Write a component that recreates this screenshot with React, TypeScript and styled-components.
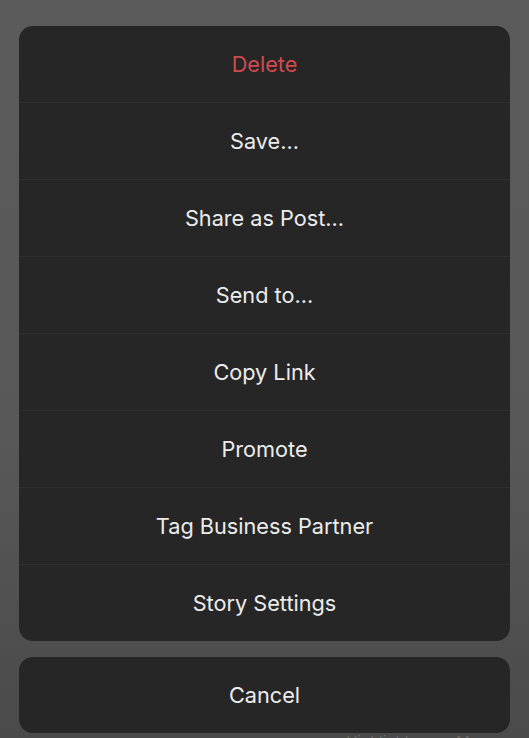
import React from "react";
import styled, { createGlobalStyle } from "styled-components";

const GlobalStyle = createGlobalStyle`
  html, body {
    margin: 0;
    padding: 0;
    height: 738px;
    overflow: hidden;
  }
  body {
    background: linear-gradient(180deg, #5b5b5b 0%, #585858 60%, #4a4a4a 100%);
    font-family: Inter, Roboto, "Liberation Sans", Arial, sans-serif;
    -webkit-font-smoothing: antialiased;
  }
`;

const Screen = styled.div`
  display: flex;
  flex-direction: column;
  gap: 16px;
  padding: 26px 19px 0;
  height: 738px;
  box-sizing: border-box;
`;

const Sheet = styled.div`
  display: flex;
  flex-direction: column;
  flex-shrink: 0;
  background: #262626;
  border-radius: 14px;
  overflow: hidden;
`;

const ActionRow = styled.button<{ $danger?: boolean; $first?: boolean }>`
  display: flex;
  align-items: center;
  justify-content: center;
  flex-shrink: 0;
  box-sizing: border-box;
  height: ${({ $first }) => ($first ? "76px" : "77px")};
  padding: 0;
  border: none;
  border-top: ${({ $first }) => ($first ? "none" : "1px solid #2f2f2f")};
  background: transparent;
  color: ${({ $danger }) => ($danger ? "#cf4b50" : "#ececec")};
  font-family: inherit;
  font-size: 21.7px;
  cursor: pointer;
`;

const CancelButton = styled(ActionRow)`
  height: 76px;
  border-top: none;
`;

const BehindBar = styled.div`
  display: flex;
  justify-content: flex-end;
  flex-shrink: 0;
  gap: 47px;
  margin-top: -15px;
  padding-right: 17px;
  color: #686868;
  font-size: 15px;
  line-height: 16px;
`;

const actions = [
  "Save...",
  "Share as Post...",
  "Send to...",
  "Copy Link",
  "Promote",
  "Tag Business Partner",
  "Story Settings",
];

export default function App() {
  return (
    <>
      <GlobalStyle />
      <Screen>
        <Sheet>
          <ActionRow $danger $first>
            Delete
          </ActionRow>
          {actions.map((a) => (
            <ActionRow key={a}>{a}</ActionRow>
          ))}
        </Sheet>
        <Sheet>
          <CancelButton>Cancel</CancelButton>
        </Sheet>
        <BehindBar>
          <span>Highlight</span>
          <span>More</span>
        </BehindBar>
      </Screen>
    </>
  );
}
